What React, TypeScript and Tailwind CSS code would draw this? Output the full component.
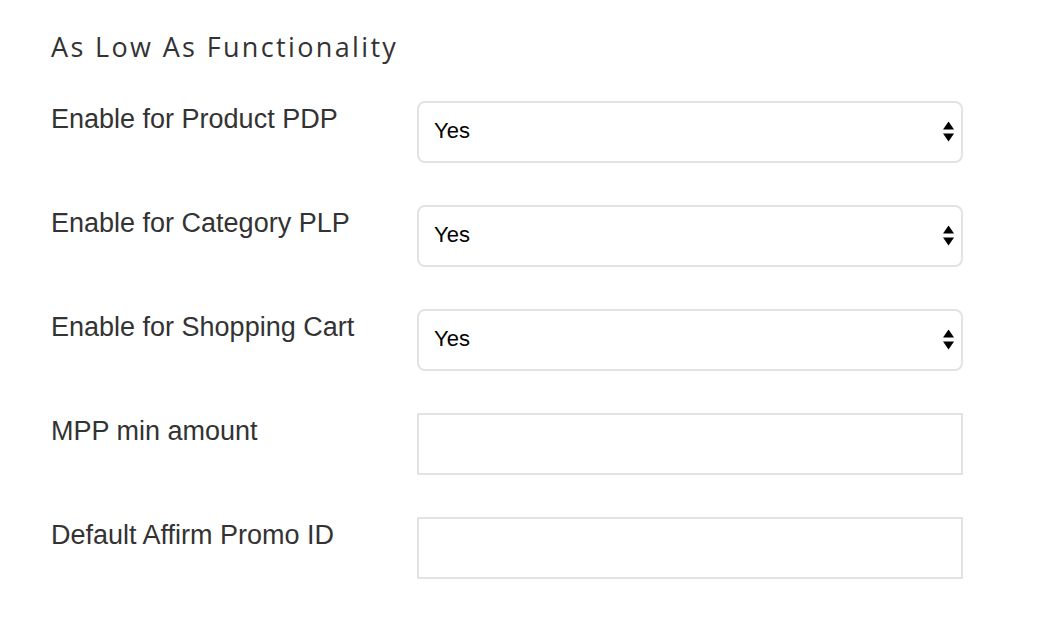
import React from 'react';

const SelectArrows = () => (
  <svg width="11" height="21" viewBox="0 0 11 21" className="absolute right-[9px] top-1/2 -translate-y-1/2 pointer-events-none">
    <path d="M5.5 0 L11 8 L0 8 Z" fill="#000" />
    <path d="M0 12 L11 12 L5.5 20 Z" fill="#000" />
  </svg>
);

const SelectRow = ({ label }: { label: string }) => (
  <div className="flex items-start">
    <label className="w-[366px] shrink-0 pt-[2px] text-[27px] leading-[32px] text-[#333]">{label}</label>
    <div className="relative w-[546px] h-[62px]">
      <select
        defaultValue="yes"
        className="appearance-none w-full h-full border-2 border-[#e3e3e3] rounded-[8px] bg-white pl-[15px] pr-10 pb-[4px] text-[22px] text-black outline-none"
        style={{ fontFamily: '"Liberation Sans", Arial, sans-serif' }}
      >
        <option value="yes">Yes</option>
        <option value="no">No</option>
      </select>
      <SelectArrows />
    </div>
  </div>
);

const InputRow = ({ label }: { label: string }) => (
  <div className="flex items-start">
    <label className="w-[366px] shrink-0 pt-[2px] text-[27px] leading-[32px] text-[#333]">{label}</label>
    <input
      type="text"
      className="w-[546px] h-[62px] border-2 border-[#e3e3e3] bg-white px-4 text-[22px] outline-none"
    />
  </div>
);

export default function App() {
  return (
    <div className="min-h-screen bg-white pl-[51px] pt-[30px] font-['Liberation_Sans',Arial,sans-serif]">
      <h2 className="text-[27px] leading-[34px] text-[#333] font-['Open_Sans',sans-serif] tracking-[2.35px] mb-[37px]">
        As Low As Functionality
      </h2>
      <div className="flex flex-col gap-[42px]">
        <SelectRow label="Enable for Product PDP" />
        <SelectRow label="Enable for Category PLP" />
        <SelectRow label="Enable for Shopping Cart" />
        <InputRow label="MPP min amount" />
        <InputRow label="Default Affirm Promo ID" />
      </div>
    </div>
  );
}
